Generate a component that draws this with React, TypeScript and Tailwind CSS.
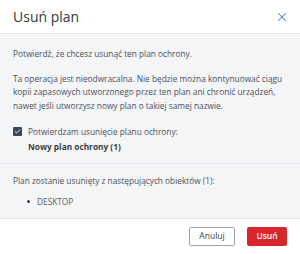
import { Check, X } from "lucide-react";

export default function App() {
    return (
        <div className="w-[300px] h-[254px] flex flex-col bg-white text-[#4b5059] font-['Open_Sans',sans-serif] overflow-hidden">
            <header className="h-[34px] shrink-0 flex items-center justify-between pl-[13px] pr-[11px] border-b border-[#e3e5e8]">
                <h1 className="text-[14px] text-[#333840]">Usuń plan</h1>
                <X className="w-[14px] h-[14px] text-[#4a7fd4]" strokeWidth={1.8} />
            </header>

            <div className="flex-1 flex flex-col bg-[#f4f5f7] text-[8.3px] leading-[13.5px]">
                <section className="px-[13px] pt-[13px] pb-[10px] border-b border-[#e3e5e8]">
                    <p>Potwierdź, że chcesz usunąć ten plan ochrony.</p>
                    <p className="mt-[11px]">
                        Ta operacja jest nieodwracalna. Nie będzie można kontynuować ciągu<br />
                        kopii zapasowych utworzonego przez ten plan ani chronić urządzeń,<br />
                        nawet jeśli utworzysz nowy plan o takiej samej nazwie.
                    </p>
                    <label className="mt-[13px] flex items-center gap-[6px]">
                        <span className="w-[9px] h-[9px] rounded-[1px] bg-[#3b4656] flex items-center justify-center">
                            <Check className="w-[7px] h-[7px] text-white" strokeWidth={3} />
                        </span>
                        <span>Potwierdzam usunięcie planu ochrony:</span>
                    </label>
                    <p className="mt-[1px] pl-[15px] font-bold text-[#3a3f47]">Nowy plan ochrony (1)</p>
                </section>

                <section className="flex-1 px-[13px] pt-[10px]">
                    <p>Plan zostanie usunięty z następujących obiektów (1):</p>
                    <ul className="mt-[7px] pl-[14px]">
                        <li className="flex items-center gap-[7px]">
                            <span className="w-[3px] h-[3px] rounded-full bg-[#3a3f47]" />
                            <span className="text-[#5a5f68]">DESKTOP</span>
                        </li>
                    </ul>
                </section>
            </div>

            <footer className="h-[36px] shrink-0 flex items-center justify-end gap-[12px] pr-[13px] border-t border-[#e3e5e8] bg-white text-[8.5px]">
                <button className="w-[46px] h-[19px] rounded-[2px] border border-[#9da3ab] text-[#3a3f47]">Anuluj</button>
                <button className="w-[40px] h-[19px] rounded-[2px] bg-[#d8262c] text-white font-semibold">Usuń</button>
            </footer>
        </div>
    );
}
